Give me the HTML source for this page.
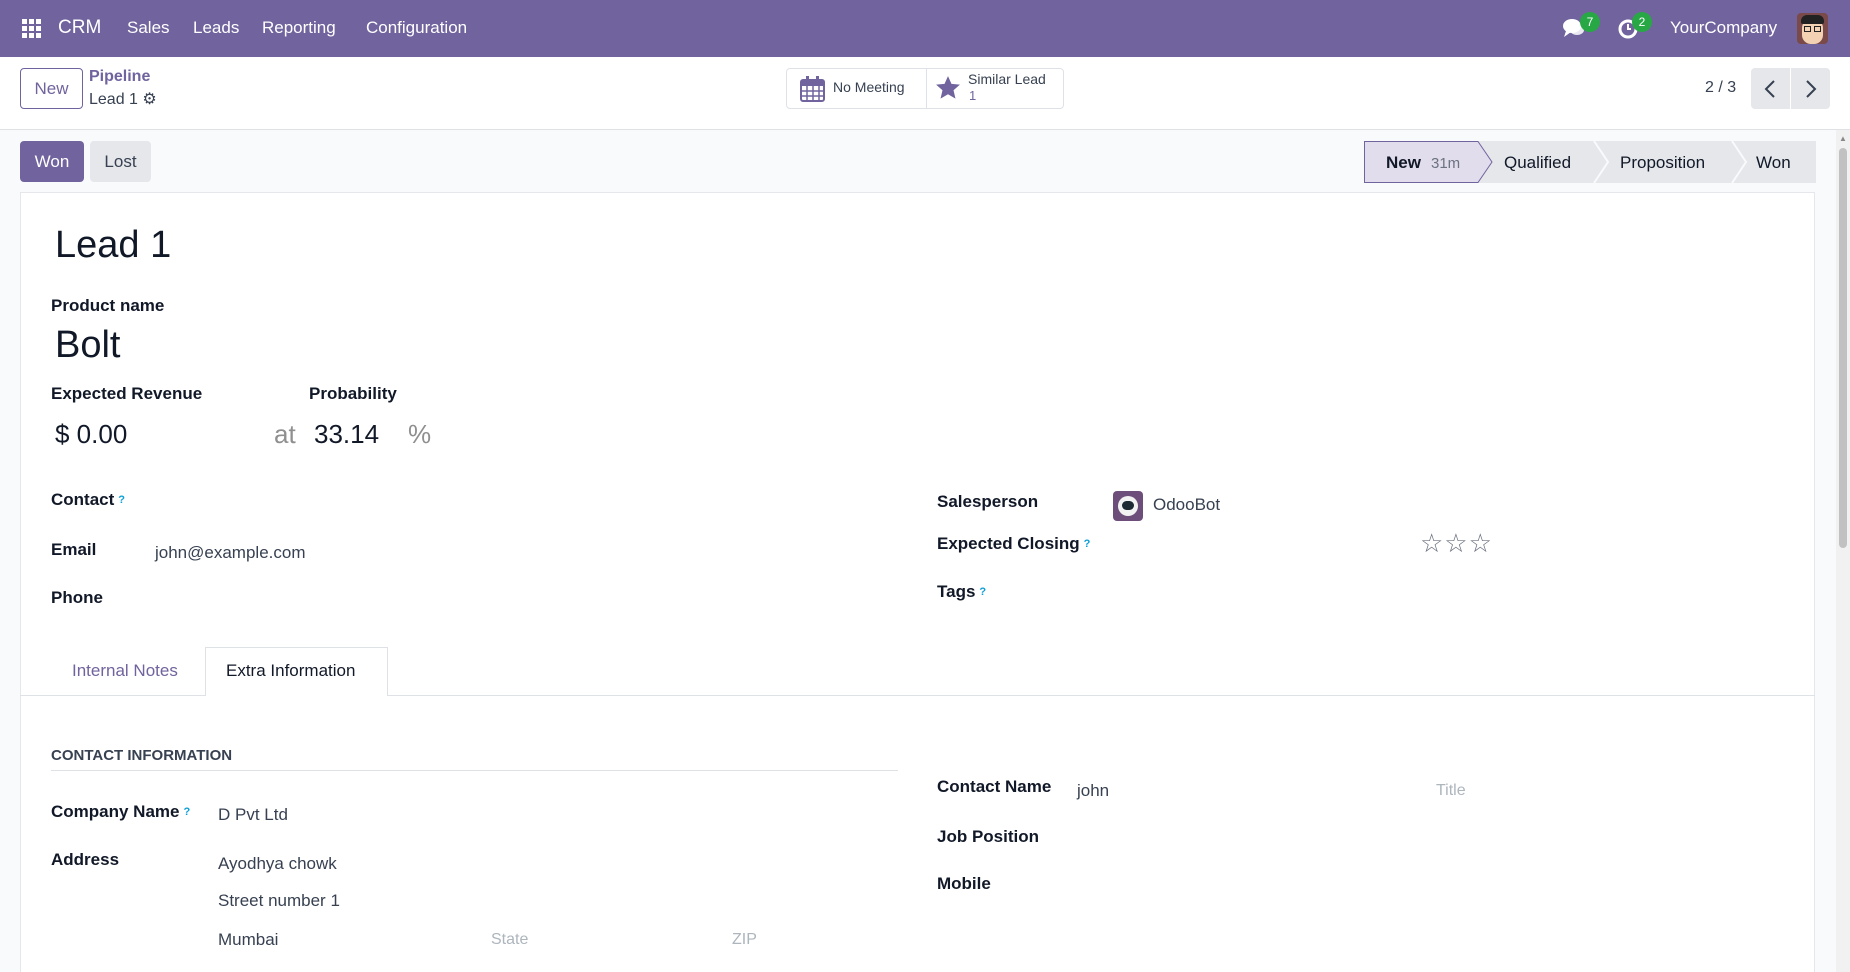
<!DOCTYPE html>
<html style="overflow:hidden;width:1850px;height:972px"><head><meta charset="utf-8"><style>
*{box-sizing:border-box;margin:0;padding:0}
body{width:1850px;height:972px;overflow:hidden;background:#f9fafb;font-family:"Liberation Sans",sans-serif;color:#212529;position:relative}
.a{position:absolute;white-space:nowrap}
.nav{position:absolute;left:0;top:0;width:1850px;height:57px;background:#71639e}
.nav .a{color:#fff;font-size:17px;top:18px}
.cp{position:absolute;left:0;top:57px;width:1850px;height:73px;background:#fff;border-bottom:1px solid #dee2e6}
.lbl{font-size:17px;font-weight:bold;color:#111827;line-height:20px}
.val{font-size:17px;color:#374151;line-height:20px}
.ph{font-size:16px;color:#adb5bd;line-height:20px}
.q{color:#0d9fd6;font-size:11px;vertical-align:top;font-weight:bold;margin-left:4px}
</style></head><body>
<div class="nav">
 <svg class="a" style="left:22px;top:19px" width="20" height="20" viewBox="0 0 20 20" fill="#fff"><rect x="0" y="0" width="5" height="5"/><rect x="7" y="0" width="5" height="5"/><rect x="14" y="0" width="5" height="5"/><rect x="0" y="7" width="5" height="5"/><rect x="7" y="7" width="5" height="5"/><rect x="14" y="7" width="5" height="5"/><rect x="0" y="14" width="5" height="5"/><rect x="7" y="14" width="5" height="5"/><rect x="14" y="14" width="5" height="5"/></svg>
 <div class="a" style="left:58px;font-size:19px;top:17px">CRM</div>
 <div class="a" style="left:127px">Sales</div>
 <div class="a" style="left:193px">Leads</div>
 <div class="a" style="left:262px">Reporting</div>
 <div class="a" style="left:366px">Configuration</div>
 <svg class="a" style="left:1562px;top:17px" width="24" height="22" viewBox="0 0 24 22" fill="#fff"><ellipse cx="10" cy="9" rx="9" ry="7"/><path d="M4 14 L2 20 L9 15Z"/><ellipse cx="15" cy="13" rx="7" ry="5" opacity=".85"/></svg>
 <div class="a" style="left:1580px;top:12px;width:20px;height:20px;border-radius:10px;background:#28a745;font-size:12px;text-align:center;line-height:20px">7</div>
 <svg class="a" style="left:1617px;top:18px" width="22" height="22" viewBox="0 0 22 22"><circle cx="11" cy="11" r="8" fill="none" stroke="#fff" stroke-width="3"/><path d="M11 6v5h3" stroke="#fff" stroke-width="2" fill="none"/></svg>
 <div class="a" style="left:1632px;top:12px;width:20px;height:20px;border-radius:10px;background:#28a745;font-size:12px;text-align:center;line-height:20px">2</div>
 <div class="a" style="left:1670px">YourCompany</div>
 <div class="a" style="left:1797px;top:13px;width:31px;height:31px;border-radius:4px;background:#7a4a4a;overflow:hidden"><div style="position:absolute;left:5px;top:6px;width:21px;height:25px;border-radius:9px;background:#f3d2b3"></div><div style="position:absolute;left:4px;top:2px;width:23px;height:9px;background:#222;border-radius:6px 6px 2px 2px"></div><div style="position:absolute;left:7px;top:13px;width:7px;height:6px;border:1.5px solid #222"></div><div style="position:absolute;left:17px;top:13px;width:7px;height:6px;border:1.5px solid #222"></div></div>
</div>
<div class="cp">
 <div class="a" style="left:20px;top:11px;width:63px;height:41px;border:1px solid #71639e;border-radius:4px;color:#71639e;font-size:17px;text-align:center;line-height:39px">New</div>
 <div class="a" style="left:89px;top:11px;font-size:16px;color:#71639e;font-weight:bold">Pipeline</div>
 <div class="a" style="left:89px;top:32px;font-size:16px;color:#374151">Lead 1 <span style="font-size:16px;color:#374151">⚙</span></div>
 <div class="a" style="left:786px;top:11px;width:278px;height:41px;border:1px solid #dee2e6;border-radius:4px"></div>
 <div class="a" style="left:926px;top:11px;width:1px;height:41px;background:#dee2e6"></div>
 <svg class="a" style="left:800px;top:19px" width="25" height="26" viewBox="0 0 25 26"><rect x="1" y="4" width="23" height="21" rx="2" fill="none" stroke="#71639e" stroke-width="2"/><rect x="1" y="4" width="23" height="6" fill="#71639e"/><path d="M1 15h23M1 20h23M7 10v15M13 10v15M19 10v15" stroke="#71639e" stroke-width="1.5"/><rect x="6" y="0" width="3" height="6" fill="#71639e"/><rect x="16" y="0" width="3" height="6" fill="#71639e"/></svg>
 <div class="a" style="left:833px;top:22px;font-size:14px;color:#374151">No Meeting</div>
 <svg class="a" style="left:935px;top:18px" width="26" height="26" viewBox="0 0 24 24"><path d="M12 1l3.2 7.2 7.8.7-5.9 5.2 1.8 7.7L12 17.8 5.1 21.8l1.8-7.7L1 8.9l7.8-.7z" fill="#71639e"/></svg>
 <div class="a" style="left:968px;top:14px;font-size:14px;color:#374151">Similar Lead</div>
 <div class="a" style="left:969px;top:31px;font-size:13px;color:#71639e">1</div>
 <div class="a" style="left:1705px;top:22px;font-size:16px;color:#374151">2 / 3</div>
 <div class="a" style="left:1751px;top:11px;width:39px;height:41px;background:#e5e7eb;border-radius:4px 0 0 4px"></div>
 <div class="a" style="left:1791px;top:11px;width:39px;height:41px;background:#e5e7eb;border-radius:0 4px 4px 0"></div>
 <svg class="a" style="left:1764px;top:23px" width="12" height="18"><path d="M10 1L2 9l8 8" fill="none" stroke="#374151" stroke-width="2"/></svg>
 <svg class="a" style="left:1805px;top:23px" width="12" height="18"><path d="M2 1l8 8-8 8" fill="none" stroke="#374151" stroke-width="2"/></svg>
</div>
<div class="a" style="left:20px;top:141px;width:64px;height:41px;background:#71639e;border-radius:4px;color:#fff;font-size:17px;text-align:center;line-height:41px">Won</div>
<div class="a" style="left:90px;top:141px;width:61px;height:41px;background:#e5e7eb;border-radius:4px;color:#374151;font-size:17px;text-align:center;line-height:41px">Lost</div>
<svg class="a" style="left:1364px;top:141px" width="452" height="42" viewBox="0 0 452 42">
 <rect x="0" y="0" width="452" height="42" fill="#e5e7eb"/>
 <path d="M0.5 0.5H114L128 21 114 41.5H0.5Z" fill="#e1dded" stroke="#71639e"/>
 <path d="M230 0l14 21-14 21M368 0l14 21-14 21" fill="none" stroke="#f9fafb" stroke-width="2"/>
 <text x="22" y="27" font-family="Liberation Sans" font-size="17" font-weight="bold" fill="#111827">New</text>
 <text x="67" y="27" font-family="Liberation Sans" font-size="15" fill="#6b7280">31m</text>
 <text x="140" y="27" font-family="Liberation Sans" font-size="17" fill="#111827">Qualified</text>
 <text x="256" y="27" font-family="Liberation Sans" font-size="17" fill="#111827">Proposition</text>
 <text x="392" y="27" font-family="Liberation Sans" font-size="17" fill="#111827">Won</text>
</svg>
<div class="a" style="left:20px;top:192px;width:1795px;height:780px;background:#fff;border:1px solid #e5e7eb;border-bottom:none"></div>
<div class="a" style="left:1836px;top:130px;width:14px;height:842px;background:#f1f1f1"></div>
<div class="a" style="left:1839px;top:148px;width:8px;height:400px;background:#c1c1c1;border-radius:4px"></div>
<div class="a" style="left:1839px;top:134px;font-size:8px;color:#888">▲</div>

<div class="a" style="left:55px;top:223px;font-size:38px;line-height:44px;color:#111827">Lead 1</div>
<div class="a lbl" style="left:51px;top:296px">Product name</div>
<div class="a" style="left:55px;top:323px;font-size:38px;line-height:44px;color:#111827">Bolt</div>
<div class="a lbl" style="left:51px;top:384px">Expected Revenue</div>
<div class="a lbl" style="left:309px;top:384px">Probability</div>
<div class="a" style="left:55px;top:418px;font-size:26px;line-height:32px;color:#111827">$ 0.00</div>
<div class="a" style="left:274px;top:418px;font-size:26px;line-height:32px;color:#8f8f8f">at</div>
<div class="a" style="left:314px;top:418px;font-size:26px;line-height:32px;color:#111827">33.14</div>
<div class="a" style="left:408px;top:418px;font-size:26px;line-height:32px;color:#8f8f8f">%</div>

<div class="a lbl" style="left:51px;top:490px">Contact<span class="q">?</span></div>
<div class="a lbl" style="left:51px;top:540px">Email</div>
<div class="a val" style="left:155px;top:543px">john@example.com</div>
<div class="a lbl" style="left:51px;top:588px">Phone</div>

<div class="a lbl" style="left:937px;top:492px">Salesperson</div>
<div class="a" style="left:1113px;top:491px;width:30px;height:30px;border-radius:4px;background:#6d4e7a"><div style="position:absolute;left:5px;top:5px;width:20px;height:20px;border-radius:10px;background:#f2f2f2"></div><div style="position:absolute;left:9px;top:10px;width:12px;height:9px;border-radius:5px;background:#1d2a33"></div></div>
<div class="a val" style="left:1153px;top:495px;font-size:17px">OdooBot</div>
<div class="a lbl" style="left:937px;top:534px">Expected Closing<span class="q">?</span></div>
<div class="a" style="left:1420px;top:528px;font-size:26px;color:#6b7280;letter-spacing:1px">☆☆☆</div>
<div class="a lbl" style="left:937px;top:582px">Tags<span class="q">?</span></div>

<div class="a" style="left:20px;top:695px;width:1795px;height:1px;background:#dee2e6"></div>
<div class="a" style="left:205px;top:647px;width:183px;height:49px;background:#fff;border:1px solid #dee2e6;border-bottom:none"></div>
<div class="a" style="left:72px;top:661px;font-size:17px;color:#71639e">Internal Notes</div>
<div class="a" style="left:226px;top:661px;font-size:17px;color:#111827">Extra Information</div>

<div class="a" style="left:51px;top:747px;font-size:15px;font-weight:bold;color:#374151">CONTACT INFORMATION</div>
<div class="a" style="left:51px;top:770px;width:847px;height:1px;background:#dee2e6"></div>
<div class="a lbl" style="left:51px;top:802px">Company Name<span class="q">?</span></div>
<div class="a val" style="left:218px;top:805px">D Pvt Ltd</div>
<div class="a lbl" style="left:51px;top:850px">Address</div>
<div class="a val" style="left:218px;top:854px">Ayodhya chowk</div>
<div class="a val" style="left:218px;top:891px">Street number 1</div>
<div class="a val" style="left:218px;top:930px">Mumbai</div>
<div class="a ph" style="left:491px;top:930px">State</div>
<div class="a ph" style="left:732px;top:930px">ZIP</div>

<div class="a lbl" style="left:937px;top:777px">Contact Name</div>
<div class="a val" style="left:1077px;top:781px">john</div>
<div class="a ph" style="left:1436px;top:781px">Title</div>
<div class="a lbl" style="left:937px;top:827px">Job Position</div>
<div class="a lbl" style="left:937px;top:874px">Mobile</div>
</body></html>
